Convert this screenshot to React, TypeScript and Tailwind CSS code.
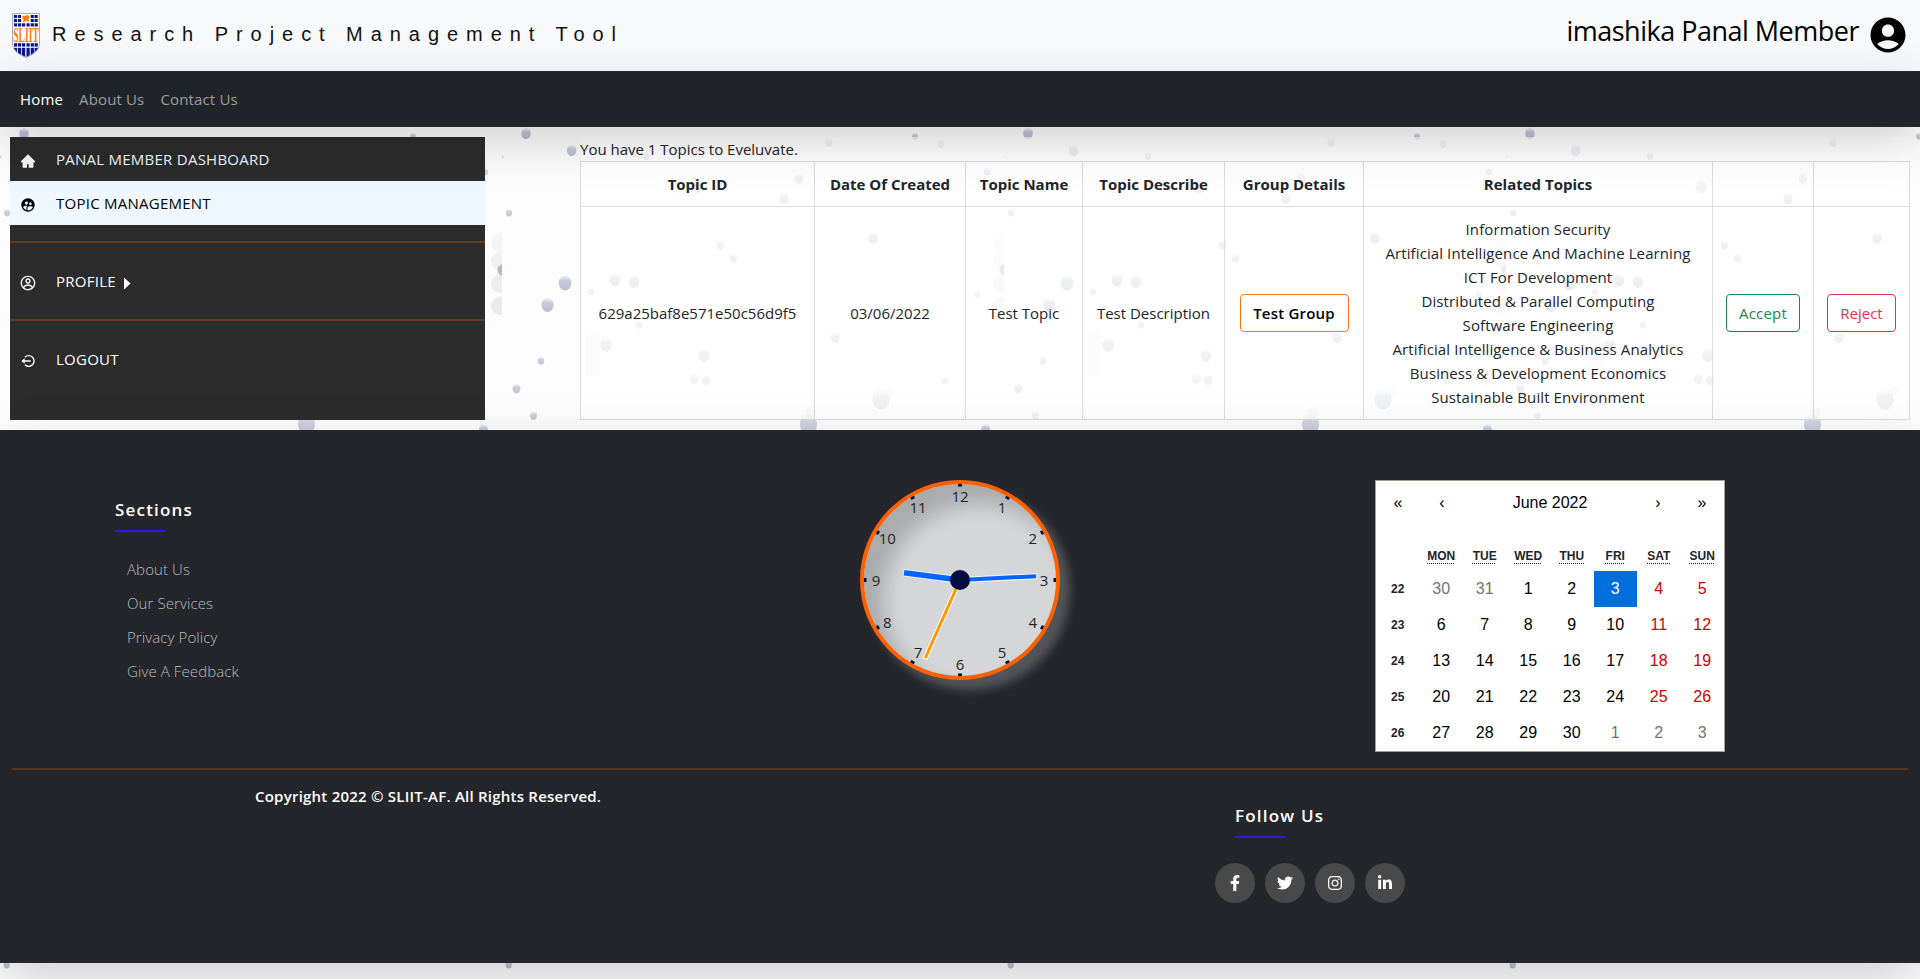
import React from "react";
import { AiFillHome } from "react-icons/ai";
import { BiLogOutCircle } from "react-icons/bi";
import { CgProfile } from "react-icons/cg";
import { FaFacebookF, FaInstagram, FaLinkedinIn, FaTwitter } from "react-icons/fa";
import { MdAccountCircle, MdSupervisedUserCircle } from "react-icons/md";

/* x, y, radius, opacity of every speck on one 502px wide background tile */
const specks: [number, number, number, number][] = [
  [24, 134, 5, 1], [413, 136.5, 3, 0.9], [69.6, 151, 5, 0.9], [0.5, 157, 1.5, 0.5],
  [485, 172, 3.2, 0.7], [7, 213, 3.2, 0.8], [63, 283.5, 6.5, 0.9], [45.5, 305.5, 6.3, 0.9],
  [39, 361, 3.4, 0.8], [14.5, 389, 4.2, 0.85], [31.5, 416, 3.6, 0.8], [306.5, 425.5, 9, 0.75],
  [483.5, 430, 4.6, 0.9], [327, 143, 3.6, 0.7], [439, 144, 3.6, 0.7], [144, 156.5, 3.2, 0.7],
  [297, 179, 4.5, 0.75], [282, 199, 4.8, 0.75], [195, 187, 6, 0.6], [218.5, 245.5, 4, 0.7],
  [231.5, 258.5, 3.8, 0.7], [113, 280.5, 5.6, 0.8], [132, 282, 5.6, 0.8], [89, 292, 3.2, 0.6],
  [371, 238.5, 5, 0.8], [137, 325, 3.5, 0.6], [104, 345.5, 6, 0.8], [202, 356, 5.6, 0.75],
  [475, 294, 3.2, 0.6], [333, 338, 4.8, 0.7], [192.5, 379, 4.8, 0.55], [204, 380.5, 4.4, 0.65],
  [443, 381, 3.2, 0.6], [379, 400, 9, 0.75], [388, 391, 4.5, 0.2], [309, 412, 5.5, 0.25],
  [6.7, 965, 3.3, 1],
];

function Backdrop() {
  return (
    <svg className="absolute inset-0 h-full w-full" aria-hidden="true">
      <defs>
        <linearGradient id="speck" x1="0" y1="0" x2="0" y2="1">
          <stop offset="0" stopColor="#bcbfdc" stopOpacity="0.15" />
          <stop offset="0.35" stopColor="#b8bbd4" stopOpacity="0.85" />
          <stop offset="1" stopColor="#b4b6ca" />
        </linearGradient>
        <pattern id="tile" width="502" height="979" patternUnits="userSpaceOnUse">
          <rect width="502" height="979" fill="#fdfdfd" />
          <g fill="#e9e9ee">
            <circle cx="501" cy="243" r="10" opacity="0.4" />
            <circle cx="500" cy="261" r="9" opacity="0.6" />
            <circle cx="500" cy="284" r="9" opacity="0.8" />
            <circle cx="500" cy="306" r="9" />
            <rect x="83" y="330" width="15" height="46" opacity="0.5" />
          </g>
          <ellipse cx="502" cy="270" rx="4.5" ry="5.5" fill="#b8bbd0" />
          {specks.map(([x, y, r, o], i) => (
            <ellipse key={i} cx={x} cy={y - r * 0.1} rx={r * 0.95} ry={r * 1.15} fill="url(#speck)" opacity={o} />
          ))}
        </pattern>
      </defs>
      <rect width="100%" height="100%" fill="url(#tile)" />
    </svg>
  );
}

function Crest() {
  const shield = "M0.5 0.5H27.5V32Q27 39 14 44.5Q1 39 0.5 32Z";
  return (
    <svg className="overflow-visible" width="28" height="45" viewBox="0 0 28 45">
      <clipPath id="shield"><path d={shield} /></clipPath>
      <g clipPath="url(#shield)">
        <rect width="28" height="45" fill="#fff" />
        <g fill="#0a1590">
          {[2, 6, 18.7, 22.6].map((x) => (
            <g key={x}>
              <rect x={x} y="2" width="3.1" height="3" />
              <rect x={x} y="6" width="3.1" height="3" />
            </g>
          ))}
          {[2, 6, 10, 14.5, 18.7, 22.6].map((x) => (
            <g key={x}>
              <rect x={x} y="10.3" width="3.2" height="3.2" />
              <rect x={x} y="30.2" width="3.2" height="3.4" />
              <rect x={x} y="34.8" width="3.2" height="10" />
            </g>
          ))}
        </g>
        <path d="M10.5 2.5l2 .6 1.5-.9 3 .4.4 2.3-1 1 .9 2.6-1.8.3-1.2-1.2-2 1.3-1.6-.5 1-2-1.3-1z" fill="#ff7a10" />
      </g>
      <path d={shield} fill="none" stroke="#a9a9d6" />
      <text transform="translate(14 29) scale(0.46 1)" textAnchor="middle" fontFamily="'Liberation Serif', serif" fontSize="21" fontWeight="700" fill="#ff7a10">SLIIT</text>
    </svg>
  );
}

function SideItem({ icon, label, className = "", children }: { icon: React.ReactNode; label: string; className?: string; children?: React.ReactNode }) {
  return (
    <li className={`flex h-11 items-center pl-[10px] ${className}`}>
      <span className="mt-1 flex w-4 justify-center text-base">{icon}</span>
      <span className="ml-5 tracking-[0.25px]">{label}</span>
      {children}
    </li>
  );
}

function Sidebar() {
  return (
    <ul className="h-[283px] w-[475px] shrink-0 bg-[#2c2c2c] text-white">
      <SideItem icon={<AiFillHome />} label="PANAL MEMBER DASHBOARD" className="text-[#f0f8ff]" />
      <SideItem icon={<MdSupervisedUserCircle />} label="TOPIC MANAGEMENT" className="bg-[#f0f8ff] text-black" />
      <li className="mt-4 h-[2px] bg-[#663b22]" />
      <SideItem icon={<CgProfile />} label="PROFILE" className="mt-4">
        <svg className="mt-1 ml-2" width="7" height="13" viewBox="0 0 7 13"><path d="M0 0.5L6.5 6.5L0 12.5Z" fill="#fff" /></svg>
      </SideItem>
      <li className="mt-4 h-[2px] bg-[#663b22]" />
      <SideItem icon={<BiLogOutCircle />} label="LOGOUT" className="mt-4" />
    </ul>
  );
}

const related = [
  "Information Security",
  "Artificial Intelligence And Machine Learning",
  "ICT For Development",
  "Distributed & Parallel Computing",
  "Software Engineering",
  "Artificial Intelligence & Business Analytics",
  "Business & Development Economics",
  "Sustainable Built Environment",
];
const heads = ["Topic ID", "Date Of Created", "Topic Name", "Topic Describe", "Group Details", "Related Topics", "", ""];

function Topics() {
  const btn = "h-[38px] rounded border text-[15px]";
  const cell = "border border-[#dcdde0] text-center align-middle";
  return (
    <section className="w-[1330px] bg-white/70 text-[#212529]">
      <p className="h-6 leading-6">You have 1 Topics to Eveluvate.</p>
      <table className="w-[1330px] table-fixed border-collapse">
        <colgroup>
          <col className="w-[234px]" /><col className="w-[151px]" /><col className="w-[117px]" /><col className="w-[142px]" />
          <col className="w-[139px]" /><col className="w-[349px]" /><col className="w-[101px]" /><col className="w-[96px]" />
        </colgroup>
        <thead>
          <tr className="h-[45px]">
            {heads.map((h, i) => <th key={i} className={`${cell} font-bold`}>{h}</th>)}
          </tr>
        </thead>
        <tbody>
          <tr className="h-[213px]">
            <td className={cell}>629a25baf8e571e50c56d9f5</td>
            <td className={cell}>03/06/2022</td>
            <td className={cell}>Test Topic</td>
            <td className={cell}>Test Description</td>
            <td className={cell}><button className={`${btn} w-[109px] border-[#ff7518] font-semibold tracking-[0.2px] text-black`}>Test Group</button></td>
            <td className={`${cell} leading-6 tracking-[0.1px]`}>{related.map((r) => <div key={r}>{r}</div>)}</td>
            <td className={cell}><button className={`${btn} w-[74px] border-[#198754] tracking-[0.2px] text-[#198754]`}>Accept</button></td>
            <td className={cell}><button className={`${btn} w-[69px] border-[#dc3545] text-[#dc3545]`}>Reject</button></td>
          </tr>
        </tbody>
      </table>
    </section>
  );
}

function Clock() {
  const numbers = Array.from({ length: 12 }, (_, i) => {
    const a = ((i + 1) * Math.PI) / 6;
    return { n: i + 1, x: 100 + 84 * Math.sin(a), y: 100 - 84 * Math.cos(a) };
  });
  return (
    <div className="h-[200px] w-[200px] rounded-full border-4 border-[#ff6000] bg-[#d4d6d8] shadow-[10px_10px_10px_rgba(255,255,255,0.22),inset_20px_20px_20px_rgba(0,0,0,0.2)]">
      <svg className="-m-1" width="200" height="200" viewBox="0 0 200 200">
        {numbers.map(({ n, x, y }) => (
          <g key={n}>
            <rect x="98" y="4" width="4" height="2.5" fill="#000f40" transform={`rotate(${n * 30} 100 100)`} />
            <text x={x} y={y + 5.6} textAnchor="middle" fontFamily="'Open Sans', sans-serif" fontSize="15" fill="#212529">{n}</text>
          </g>
        ))}
        <g strokeLinecap="butt">
          <path d="M100 100L43.3 92.6" stroke="#fff" strokeOpacity="0.75" strokeWidth="7.5" />
          <path d="M100 100L44 92.7" stroke="#0066ff" strokeWidth="5.5" />
          <path d="M100 100L176.6 96.2" stroke="#fff" strokeOpacity="0.75" strokeWidth="6" />
          <path d="M100 100L176 96.2" stroke="#0066ff" strokeWidth="4" />
          <path d="M100 100L64.9 179" stroke="#fff" strokeOpacity="0.85" strokeWidth="5" />
          <path d="M100 100L65.3 178" stroke="#ff9800" strokeWidth="3" />
        </g>
        <circle cx="100" cy="100" r="10" fill="#000f40" />
      </svg>
    </div>
  );
}

const weeks = [
  [22, 30, 31, 1, 2, 3, 4, 5],
  [23, 6, 7, 8, 9, 10, 11, 12],
  [24, 13, 14, 15, 16, 17, 18, 19],
  [25, 20, 21, 22, 23, 24, 25, 26],
  [26, 27, 28, 29, 30, 1, 2, 3],
];

function dayStyle(row: number, col: number, day: number) {
  if (col === 0) return "text-xs font-bold text-[#212529]";
  if ((row === 0 && day > 7) || (row === 4 && day < 20)) return "text-[#757575]";
  if (row === 0 && day === 3) return "bg-[#006edc] text-white";
  return col > 5 ? "text-[#d10000]" : "text-black";
}

function Calendar() {
  return (
    <div className="h-[272px] w-[350px] border border-[#a0a096] bg-white font-['Liberation_Sans',Arial,sans-serif] text-base text-black">
      <div className="mb-4 flex h-11 items-center text-center">
        <span className="w-11">«</span>
        <span className="w-11">‹</span>
        <span className="grow">June 2022</span>
        <span className="w-11">›</span>
        <span className="w-11">»</span>
      </div>
      <div className="grid grid-cols-8 text-center">
        {["", "MON", "TUE", "WED", "THU", "FRI", "SAT", "SUN"].map((d) => (
          <span key={d} className="h-[30px] pt-[6px] text-xs leading-[18px] font-bold text-[#212529] underline decoration-dotted underline-offset-[3px]">{d}</span>
        ))}
        {weeks.map((w, r) =>
          w.map((d, c) => (
            <span key={`${r}-${c}`} className={`flex h-9 items-center justify-center ${dayStyle(r, c, d)}`}>{d}</span>
          )),
        )}
      </div>
    </div>
  );
}

function Heading({ children }: { children: React.ReactNode }) {
  return (
    <h4 className="text-[17px] leading-5 font-semibold tracking-[1.2px] text-white after:mt-[10px] after:block after:h-[2px] after:w-[50px] after:bg-[#2a1ae8]">
      {children}
    </h4>
  );
}

function Footer() {
  return (
    <footer className="relative h-[533px] bg-[#24262b] px-3 shadow-[0_16px_48px_rgba(0,0,0,0.175)]">
      <div className="grid h-[338px] grid-cols-[1fr_200px_1fr] pt-[50px]">
        <div className="pt-5 pl-[103px]">
          <Heading>Sections</Heading>
          <ul className="mt-5 pl-3 text-[15px] leading-[34px] font-light tracking-[0.1px] text-[#bbbbbb]">
            <li>About Us</li>
            <li>Our Services</li>
            <li>Privacy Policy</li>
            <li>Give A Feedback</li>
          </ul>
        </div>
        <Clock />
        <div className="pl-[315px]"><Calendar /></div>
      </div>
      <div className="h-[2px] bg-[#5a3521]" />
      <div className="flex">
        <p className="w-[1203px] pt-[14px] pl-[243px] font-semibold tracking-[0.23px] leading-6 text-white">Copyright 2022 © SLIIT-AF. All Rights Reserved.</p>
        <div className="pt-9">
          <div className="pl-5"><Heading>Follow Us</Heading></div>
          <div className="mt-[25px] flex gap-[10px] text-base text-white">
            {[FaFacebookF, FaTwitter, FaInstagram, FaLinkedinIn].map((Icon, i) => (
              <span key={i} className="flex h-10 w-10 items-center justify-center rounded-full bg-[#494949]"><Icon /></span>
            ))}
          </div>
        </div>
      </div>
    </footer>
  );
}

export default function App() {
  return (
    <div className="relative h-[979px] w-full overflow-hidden font-['Open_Sans',sans-serif] text-[15px]">
      <Backdrop />
      <header className="relative flex h-[71px] items-center bg-[#f8f9fb] pr-3 pl-3">
        <Crest />
        <h1 className="-mt-1 ml-3 font-['Liberation_Sans',Arial,sans-serif] text-xl leading-none tracking-[7.95px] text-[#111]">Research Project Management Tool</h1>
        <div className="-mt-[2px] ml-auto flex items-center text-black">
          <span className="mt-[-8px] text-[27px] leading-none tracking-[-0.5px]">imashika Panal Member</span>
          <MdAccountCircle className="ml-2 -mr-[1px] text-[42px]" />
        </div>
      </header>
      <nav className="relative z-10 flex h-14 items-center gap-4 bg-[#212529] pl-5 text-[#9b9d9f] shadow-[0_16px_48px_rgba(0,0,0,0.175)]">
        <span className="tracking-[0.15px] text-white">Home</span>
        <span className="tracking-[0.15px]">About Us</span>
        <span className="tracking-[0.15px]">Contact Us</span>
      </nav>
      <main className="relative flex h-[303px] items-start justify-between p-[10px]">
        <Sidebar />
        <Topics />
      </main>
      <Footer />
    </div>
  );
}
